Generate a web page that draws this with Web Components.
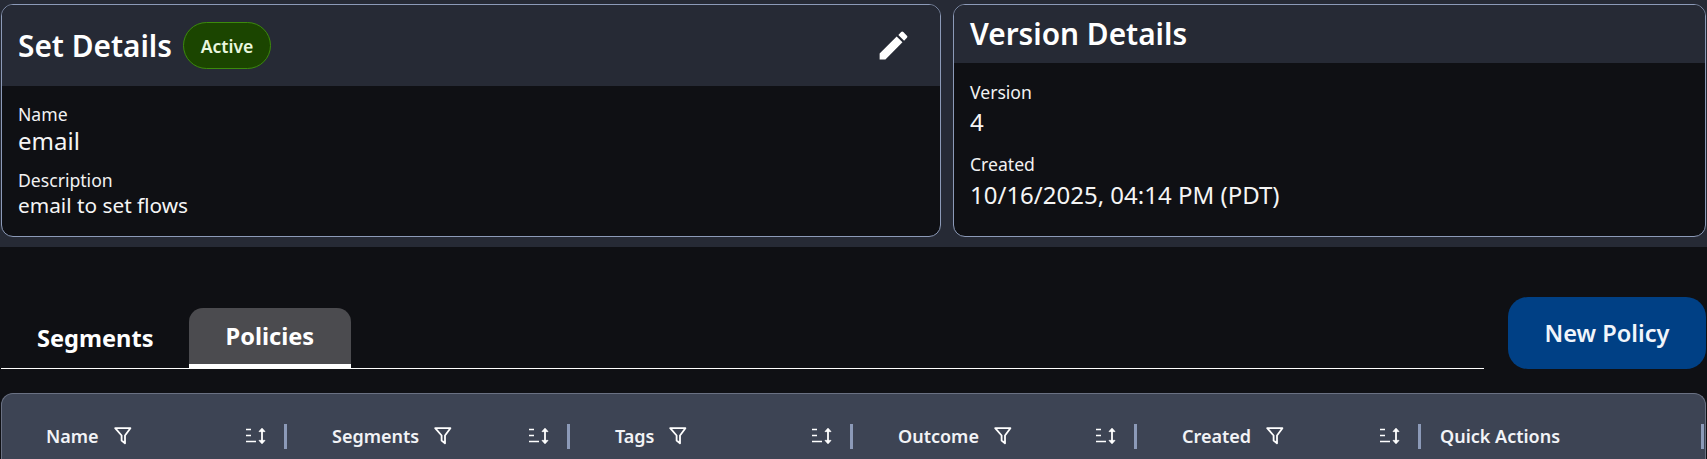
<!DOCTYPE html>
<html lang="en"><head><meta charset="utf-8">
<style>
html,body{margin:0;padding:0;background:#0f1014;height:459px;overflow:hidden}
body{font-family:"Noto Sans","Open Sans",sans-serif;color:#fff}
</style></head><body>
<policy-page></policy-page>
<script>
const ICONS={
 edit:'<svg width="37" height="37" viewBox="0 0 24 24" fill="#fff"><path d="M3 17.25V21h3.75L17.81 9.94l-3.75-3.75L3 17.25zM20.71 7.04a1 1 0 0 0 0-1.41l-2.34-2.34a1 1 0 0 0-1.41 0l-1.83 1.83 3.75 3.75 1.83-1.83z"/></svg>',
 filter:'<svg width="18" height="18" viewBox="0 0 18 18" fill="none" stroke="#fff" stroke-width="1.8" stroke-linejoin="round"><path d="M1.2 1.2h15.2L11 8.5v7.8L7.6 13.5V8.5z"/></svg>',
 sort:'<svg width="22" height="18" viewBox="0 0 22 18" fill="none" stroke="#fff"><path d="M0 2.5h5M0 8.5h5M0 14.5h10" stroke-width="1.7"/><path d="M16 2v14" stroke-width="1.8"/><path d="M13 4.6 16 1.2l3 3.4zM13 13.4 16 16.8l3-3.4z" fill="#fff" stroke-width=".8"/></svg>'
};
function def(name,html){
  customElements.define(name,class extends HTMLElement{
    connectedCallback(){ if(this.shadowRoot)return; const r=this.attachShadow({mode:'open'}); r.innerHTML=typeof html==='function'?html(this):html;}
  });
}
def('detail-card',el=>`<style>
:host{display:flex;flex-direction:column;box-sizing:border-box;background:#0f1014;border:1px solid #8c9ab8;border-radius:12px;overflow:hidden;height:233px}
header{display:flex;align-items:center;background:#262a35;height:${el.getAttribute('hh')}px;padding:0 16px;flex:none}
h2{margin:0;font-size:29.8px;font-weight:600;line-height:40px}
.body{padding:${el.getAttribute('pt')}px 16px 0;display:flex;flex-direction:column}
.extra{display:flex;align-items:center;flex:1}
</style><header><h2>${el.getAttribute('heading')}</h2><div class="extra"><slot name="head"></slot></div></header><div class="body"><slot></slot></div>`);
def('detail-field',el=>`<style>
:host{display:block;margin-bottom:${el.getAttribute('mb')||0}px}
.l{font-size:17.6px;line-height:24px;color:#f2f2f2}
.v{font-size:${el.getAttribute('size')}px;line-height:${el.getAttribute('lh')}px;margin-top:${el.getAttribute('gap')||0}px;color:#f5f5f5}
</style><div class="l">${el.getAttribute('label')}</div><div class="v">${el.getAttribute('value')}</div>`);
def('status-pill',`<style>
:host{display:inline-flex;align-items:center;justify-content:center;box-sizing:border-box;width:88px;height:47px;margin-left:11px;background:#1b4500;border:1px solid #3c8a0c;border-radius:24px;font-size:17.6px;font-weight:600;color:#e9f7df}
</style><slot></slot>`);
def('icon-button',`<style>
:host{display:flex;margin-left:auto;margin-right:12px;width:37px;height:37px;color:#fff}
</style>`+ICONS.edit);
def('tab-item',`<style>
:host{display:flex;align-items:center;justify-content:center;box-sizing:border-box;height:60px;font-size:23.6px;font-weight:700;line-height:32px;padding:0 35px 0 36px}
:host([active]){background:#4b4b4f;border-radius:14px 14px 0 0;border-bottom:4px solid #fff;padding:0 37px}
</style><slot></slot>`);
def('tab-row',`<style>
:host{display:flex;flex:none;width:1483px;height:60px;margin-top:11px;border-bottom:1px solid #fff;box-sizing:content-box}
</style><slot></slot>`);
def('action-button',`<style>
:host{display:flex;align-items:center;justify-content:center;width:198px;height:72px;background:#004085;border-radius:20px;font-size:23.6px;font-weight:600;color:#f1f5fb}
</style><slot></slot>`);
def('head-cell',el=>{
  const f=el.hasAttribute('plain');
  return `<style>
:host{display:flex;align-items:center;box-sizing:border-box;height:100%;padding-left:${el.getAttribute('pl')||45}px;font-size:18px;font-weight:600;color:#f2f3f6}
.f{margin-left:15px;display:flex}
.s{margin-left:auto;margin-right:16px;display:flex}
i{flex:none;width:3px;height:25px;background:#8c9ab8}
</style><span>${el.getAttribute('label')}</span>${f?'<span class="s"></span>':`<span class="f">${ICONS.filter}</span><span class="s">${ICONS.sort}</span>`}<i></i>`;
});
def('data-table',`<style>
:host{display:block;box-sizing:border-box;margin:0 1px;height:80px;background:#3d4454;border:1px solid #6a7183;border-bottom:0;border-radius:12px 12px 0 0}
.h{display:grid;grid-template-columns:285px 283px 283px 284px 284px 283px;height:84px;align-items:center}
</style><div class="h"><slot></slot></div>`);
def('policy-page',`<style>
:host{display:block}
.top{display:grid;grid-template-columns:940px 1fr;column-gap:12px;background:#262a35;padding:4px 1px 10px}
.mid{display:flex;align-items:flex-start;justify-content:space-between;padding:50px 1px 0 1px;height:96px}
</style>
<div class="top">
 <detail-card heading="Set Details" hh="81" pt="16">
  <status-pill slot="head">Active</status-pill><icon-button slot="head"></icon-button>
  <detail-field label="Name" value="email" size="24" lh="30" mb="12"></detail-field>
  <detail-field label="Description" value="email to set flows" size="20.8" lh="27"></detail-field>
 </detail-card>
 <detail-card heading="Version Details" hh="58" pt="17">
  <detail-field label="Version" value="4" size="24" lh="30" gap="3" mb="15"></detail-field>
  <detail-field label="Created" value="10/16/2025, 04:14 PM (PDT)" size="24" lh="30" gap="4"></detail-field>
 </detail-card>
</div>
<div class="mid">
 <tab-row><tab-item>Segments</tab-item><tab-item active>Policies</tab-item></tab-row>
 <action-button>New Policy</action-button>
</div>
<data-table>
 <head-cell label="Name" pl="44"></head-cell><head-cell label="Segments"></head-cell><head-cell label="Tags"></head-cell><head-cell label="Outcome"></head-cell><head-cell label="Created"></head-cell><head-cell label="Quick Actions" plain pl="19"></head-cell>
</data-table>`);
</script>
</body></html>
